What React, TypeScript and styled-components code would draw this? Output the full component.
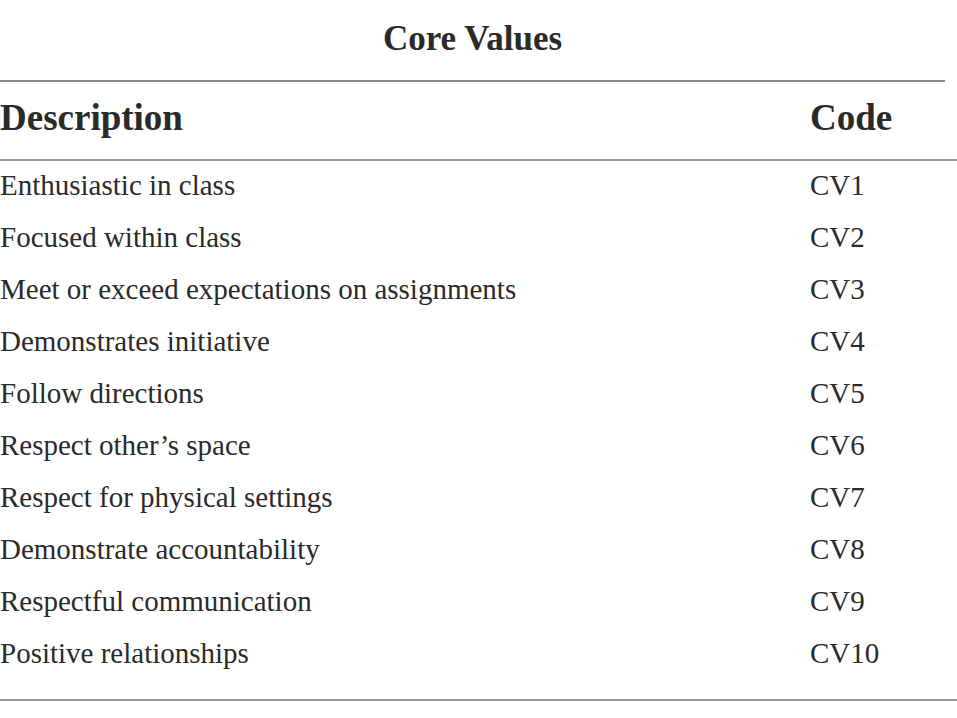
import React from "react";
import styled, { createGlobalStyle } from "styled-components";

const Global = createGlobalStyle`
  html, body { margin: 0; padding: 0; background: #ffffff; }
  body { font-family: "Liberation Serif", "Times New Roman", serif; color: #2a2a2a; }
`;

const Page = styled.div`
  width: 957px;
  display: flex;
  flex-direction: column;
`;

const TitleBar = styled.div`
  width: 945px;
  height: 82px;
  box-sizing: border-box;
  display: flex;
  align-items: center;
  justify-content: center;
  border-bottom: 2px solid #8a8a8a;
  font-weight: 700;
  font-size: 35px;
  padding-bottom: 2px;
`;

const Table = styled.div`
  display: grid;
  grid-template-columns: 810px 1fr;
  border-bottom: 2px solid #9a9a9a;
  padding-bottom: 18px;
`;

const HeadCell = styled.div`
  height: 79px;
  box-sizing: border-box;
  display: flex;
  align-items: center;
  font-weight: 700;
  font-size: 37px;
  border-bottom: 2px solid #9a9a9a;
  padding-bottom: 7px;
`;

const Cell = styled.div`
  height: 52px;
  box-sizing: border-box;
  display: flex;
  align-items: center;
  font-size: 29px;
  white-space: nowrap;
  padding-bottom: 3px;
`;

const rows: [string, string][] = [
  ["Enthusiastic in class", "CV1"],
  ["Focused within class", "CV2"],
  ["Meet or exceed expectations on assignments", "CV3"],
  ["Demonstrates initiative", "CV4"],
  ["Follow directions", "CV5"],
  ["Respect other\u2019s space", "CV6"],
  ["Respect for physical settings", "CV7"],
  ["Demonstrate accountability", "CV8"],
  ["Respectful communication", "CV9"],
  ["Positive relationships", "CV10"],
];

export default function App() {
  return (
    <Page>
      <Global />
      <TitleBar>Core Values</TitleBar>
      <Table>
        <HeadCell>Description</HeadCell>
        <HeadCell>Code</HeadCell>
        {rows.map(([d, c]) => (
          <React.Fragment key={c}>
            <Cell>{d}</Cell>
            <Cell>{c}</Cell>
          </React.Fragment>
        ))}
      </Table>
    </Page>
  );
}
